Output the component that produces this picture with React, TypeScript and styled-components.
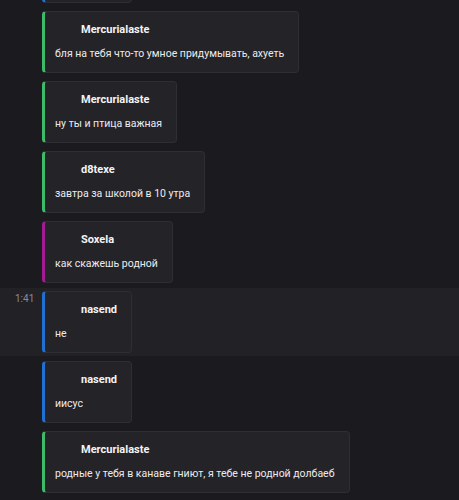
import React from "react";
import styled, { createGlobalStyle } from "styled-components";

const Global = createGlobalStyle`
  html, body { margin: 0; padding: 0; background: #1b1a1f; overflow: hidden; height: 500px; }
  body { font-family: Roboto, "Noto Sans", sans-serif; }
`;

const List = styled.div`
  display: flex;
  flex-direction: column;
  gap: 2px;
  margin-top: -62px;
`;

const Row = styled.div<{ $hover?: boolean }>`
  display: flex;
  align-items: flex-start;
  padding: 3px 0 3px;
  background: ${(p) => (p.$hover ? "#222126" : "transparent")};
`;

const Gutter = styled.div`
  width: 42px;
  flex: 0 0 42px;
  box-sizing: border-box;
  padding: 0 0 0 15px;
  line-height: 12px;
`;

const Time = styled.span`
  font-size: 10px;
  line-height: 12px;
  color: #8c8b92;
`;

const Card = styled.div<{ $accent: string }>`
  display: flex;
  flex-direction: column;
  gap: 8px;
  box-sizing: border-box;
  height: 62px;
  padding: 10px 14px 10px 10px;
  background: #242328;
  border: 1px solid #2f2e34;
  border-left: 3px solid ${(p) => p.$accent};
  border-radius: 4px;
`;

const Name = styled.div`
  margin-left: 26px;
  font-size: 11px;
  line-height: 16px;
  font-weight: 700;
  color: #f4f4f6;
  white-space: nowrap;
`;

const Text = styled.div`
  font-size: 10.5px;
  line-height: 16px;
  color: #ececef;
  white-space: nowrap;
`;

const GREEN = "#3dbb6b";
const BLUE = "#2070d4";
const PURPLE = "#a11b94";

const messages: { name: string; text: string; accent: string; time?: string }[] = [
  { name: "nasend", text: "да", accent: BLUE },
  { name: "Mercurialaste", text: "бля на тебя что-то умное придумывать, ахуеть", accent: GREEN },
  { name: "Mercurialaste", text: "ну ты и птица важная", accent: GREEN },
  { name: "d8texe", text: "завтра за школой в 10 утра", accent: GREEN },
  { name: "Soxela", text: "как скажешь родной", accent: PURPLE },
  { name: "nasend", text: "не", accent: BLUE, time: "1:41" },
  { name: "nasend", text: "иисус", accent: BLUE },
  { name: "Mercurialaste", text: "родные у тебя в канаве гниют, я тебе не родной долбаеб", accent: GREEN },
];

export default function App() {
  return (
    <>
      <Global />
      <List>
        {messages.map((m, i) => (
          <Row key={i} $hover={!!m.time}>
            <Gutter>{m.time && <Time>{m.time}</Time>}</Gutter>
            <Card $accent={m.accent}>
              <Name>{m.name}</Name>
              <Text>{m.text}</Text>
            </Card>
          </Row>
        ))}
      </List>
    </>
  );
}
